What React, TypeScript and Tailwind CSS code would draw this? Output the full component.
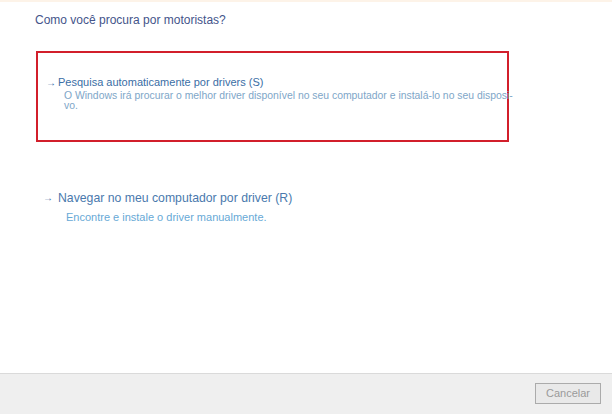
export default function App() {
  return (
    <div className="w-[612px] h-[414px] flex flex-col bg-white font-['Liberation_Sans',Arial,sans-serif] overflow-hidden">
      <div className="h-[2px] bg-[#fdf3e8]" />
      <main className="flex-1 px-[35px]">
        <h1 className="mt-[10px] text-[12px] leading-[16px] text-[#44548a]">
          Como você procura por motoristas?
        </h1>

        <div className="mt-[23px] ml-[1px] w-[473px] h-[91px] border-2 border-[#d21f2b] pt-[23px] pl-[8px]">
          <div className="flex items-center text-[11px] leading-[13px] text-[#3a6ea5]">
            <span className="w-[12px] text-[10px]">→</span>
            <span>Pesquisa automaticamente por drivers (S)</span>
          </div>
          <p className="ml-[18px] mt-[2px] whitespace-nowrap text-[10.4px] leading-[10px] text-[#7ea6c8]">
            O Windows irá procurar o melhor driver disponível no seu computador e instalá-lo no seu disposi-
            <br />
            vo.
          </p>
        </div>

        <div className="mt-[48px] ml-[8px]">
          <div className="flex items-center text-[12.25px] leading-[16px] text-[#4a79ad]">
            <span className="w-[15px] text-[10px]">→</span>
            <span>Navegar no meu computador por driver (R)</span>
          </div>
          <p className="ml-[23px] mt-[5px] text-[11px] leading-[13px] text-[#67a9d6]">
            Encontre e instale o driver manualmente.
          </p>
        </div>
      </main>

      <footer className="h-[41px] bg-[#efefef] border-t border-[#dadada] flex items-start justify-end pr-[11px] pt-[9px]">
        <button className="w-[66px] h-[21px] border border-[#ababab] bg-[#e9e9e9] text-[11px] text-[#9a9a9a] leading-[19px]">
          Cancelar
        </button>
      </footer>
    </div>
  )
}
